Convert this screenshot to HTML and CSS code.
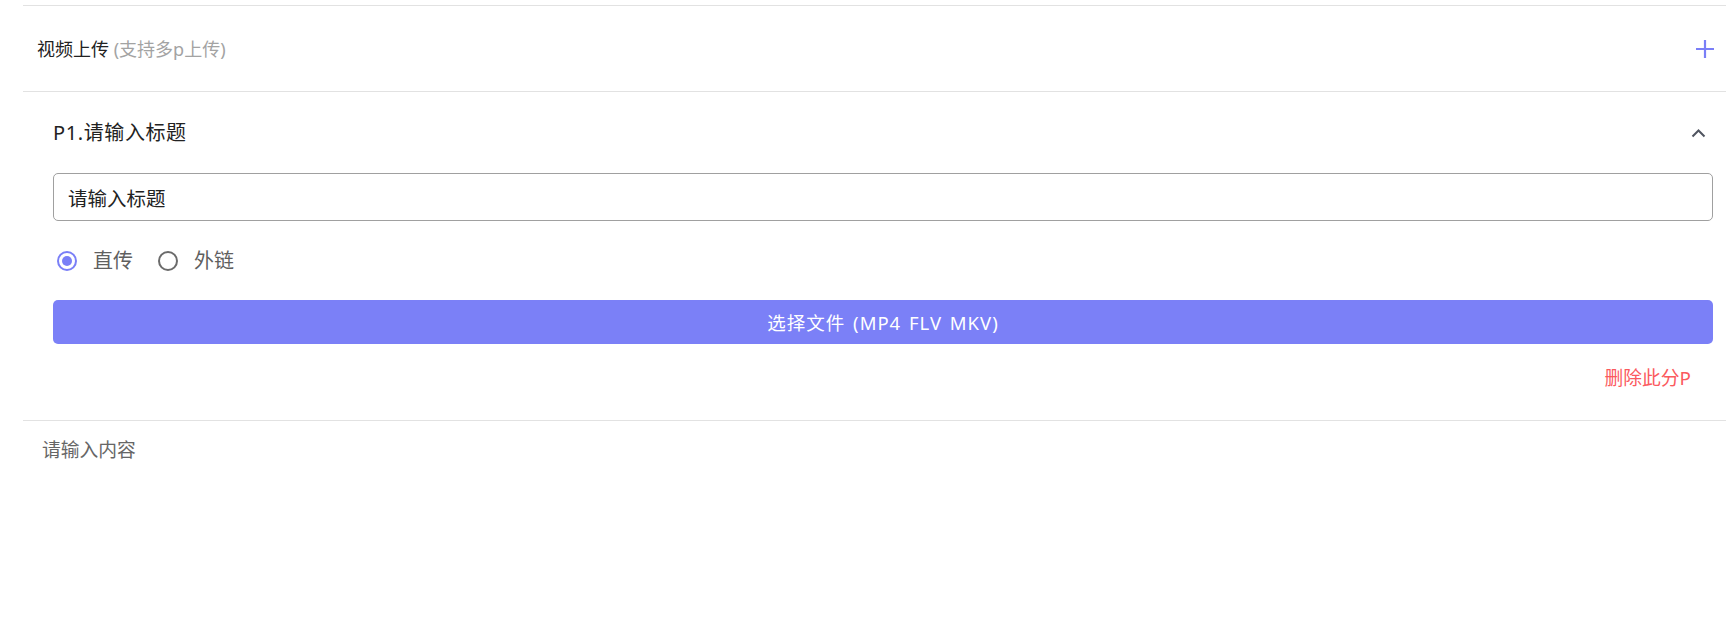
FILE: index.html
```html
<!DOCTYPE html>
<html lang="zh-CN">
<head>
  <meta charset="UTF-8">
  <title>视频上传</title>
  <link rel="stylesheet" href="styles.css">
</head>
<body>
  <div class="panel">
    <div class="upload-head">
      <div class="upload-title">视频上传 <span class="upload-tip">(支持多p上传)</span></div>
      <svg class="add-icon" width="18" height="18" viewBox="0 0 18 18">
        <path d="M9 0v18M0 9h18" stroke="#7a7ff7" stroke-width="2.2" fill="none"/>
      </svg>
    </div>

    <div class="part">
      <div class="part-head">
        <span class="part-title">P1.请输入标题</span>
        <svg class="fold-icon" width="15" height="10" viewBox="0 0 15 10">
          <path d="M1.5 8.5L7.5 2.5L13.5 8.5" stroke="#505560" stroke-width="2" fill="none"/>
        </svg>
      </div>

      <input class="title-input" type="text" value="请输入标题">

      <div class="radio-row">
        <label class="radio checked"><span class="radio-dot"></span><span class="radio-label">直传</span></label>
        <label class="radio"><span class="radio-dot"></span><span class="radio-label">外链</span></label>
      </div>

      <button class="file-btn">选择文件 (MP4 FLV MKV)</button>

      <div class="part-foot">
        <span class="del-link">删除此分P</span>
      </div>
    </div>

    <div class="content-box">请输入内容</div>
  </div>
</body>
</html>
```

FILE: styles.css
```css
* {
  box-sizing: border-box;
}

body {
  margin: 0;
  font-family: "Noto Sans", "Noto Sans CJK SC", sans-serif;
  background: #ffffff;
  color: #222;
}

.panel {
  margin: 5px 0 0 23px;
}

.upload-head {
  display: flex;
  align-items: center;
  justify-content: space-between;
  height: 87px;
  padding: 0 12px 0 14px;
  border-top: 1px solid #e2e2e2;
  border-bottom: 1px solid #e2e2e2;
}

.upload-title {
  font-size: 18px;
  line-height: 24px;
  color: #222;
}

.upload-tip {
  color: #a3a3a3;
}

.part {
  padding: 0 13px 0 30px;
  border-bottom: 1px solid #e2e2e2;
}

.part-head {
  display: flex;
  align-items: center;
  justify-content: space-between;
  height: 81px;
  padding-right: 7px;
}

.part-title {
  font-size: 20px;
  line-height: 26px;
  letter-spacing: 0.6px;
  color: #222;
}

.title-input {
  display: block;
  width: 100%;
  height: 48px;
  padding: 0 14px;
  border: 1px solid #a0a0a0;
  border-radius: 5px;
  font-family: inherit;
  font-size: 19.5px;
  color: #222;
  outline: none;
}

.radio-row {
  display: flex;
  align-items: center;
  height: 40px;
  margin: 20px 0 19px;
  padding-left: 4px;
}

.radio {
  display: flex;
  align-items: center;
  margin-right: 25px;
  cursor: pointer;
}

.radio-dot {
  width: 20px;
  height: 20px;
  border: 2px solid #6b6b6b;
  border-radius: 50%;
  position: relative;
}

.radio.checked .radio-dot {
  border-color: #7a7ff7;
}

.radio.checked .radio-dot::after {
  content: "";
  position: absolute;
  left: 3px;
  top: 3px;
  width: 10px;
  height: 10px;
  border-radius: 50%;
  background: #7a7ff7;
}

.radio-label {
  margin-left: 16px;
  font-size: 20px;
  line-height: 26px;
  color: #5f5f5f;
}

.file-btn {
  display: block;
  width: 100%;
  height: 44px;
  border: none;
  border-radius: 5px;
  background: #7b80f7;
  color: #ffffff;
  font-family: inherit;
  font-size: 18.5px;
  letter-spacing: 1px;
  word-spacing: 2px;
  cursor: pointer;
}

.part-foot {
  display: flex;
  justify-content: flex-end;
  padding: 22px 22px 30px 0;
}

.del-link {
  font-size: 18.8px;
  line-height: 24px;
  color: #fb5a5e;
  cursor: pointer;
}

.content-box {
  padding: 17px 19px;
  font-size: 18.8px;
  line-height: 24px;
  color: #666;
}
```
